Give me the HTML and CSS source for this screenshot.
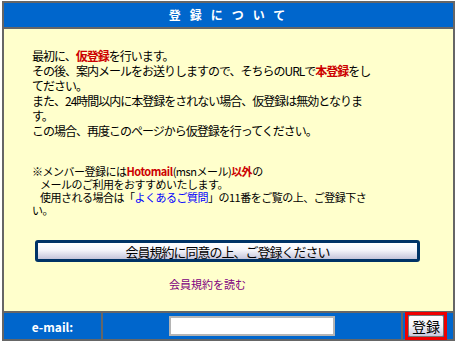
FILE: index.html
```html
<!DOCTYPE html>
<html lang="ja">
<head>
    <meta charset="UTF-8">
    <title>登録について</title>
    <link rel="stylesheet" href="styles.css">
</head>
<body>
    <div class="box">
        <div class="head">登録について</div>

        <div class="content">
            <p class="lead">
                最初に、<b class="red">仮登録</b>を行います。<br>
                その後、案内メールをお送りしますので、そちらのURLで<b class="red">本登録</b>をし<br>
                てださい。<br>
                また、24時間以内に本登録をされない場合、仮登録は無効となりま<br>
                す。<br>
                この場合、再度このページから仮登録を行ってください。
            </p>

            <p class="note">
                ※メンバー登録には<b class="red">Hotomail</b>(msnメール)<b class="red">以外</b>の<br>
                <span class="indent">メールのご利用をおすすめいたします。</span><br>
                <span class="indent">使用される場合は「<a href="#" class="faq">よくあるご質問</a>」の11番をご覧の上、ご登録下さ</span><br>
                い。
            </p>

            <div class="agree-wrap">
                <button class="agree">会員規約に同意の上、ご登録ください</button>
            </div>

            <div class="terms"><a href="#">会員規約を読む</a></div>
        </div>

        <div class="foot">
            <div class="cell label">e-mail:</div>
            <div class="cell field"><input type="text"></div>
            <div class="cell action">
                <div class="mark"><button class="send">登録</button></div>
            </div>
        </div>
    </div>
</body>
</html>
```

FILE: styles.css
```css
body {
    margin: 0;
    padding: 1px 0 0 2px;
    font-family: "Noto Sans CJK JP", "Noto Sans", sans-serif;
    color: #000;
}
.box {
    width: 449px;
    border: 2px solid #666;
    background: #ffffcc;
}
.head {
    height: 24px;
    line-height: 24px;
    background: #0066cc;
    border-bottom: 2px solid #666;
    color: #fff;
    font-weight: bold;
    font-size: 12px;
    text-align: center;
    letter-spacing: 9px;
    padding-left: 6px;
}
.content {
    height: 263px;
    padding: 19px 0 0 28px;
}
.lead {
    margin: 0;
    font-size: 12px;
    line-height: 15px;
    letter-spacing: -1px;
    white-space: nowrap;
}
.note {
    margin: 27px 0 0 0;
    font-size: 11px;
    line-height: 13px;
    letter-spacing: -0.5px;
    white-space: nowrap;
}
.indent {
    padding-left: 8px;
}
.red {
    color: #cc0000;
}
.faq {
    color: #0000ff;
    text-decoration: none;
}
.agree-wrap {
    margin-top: 23px;
    width: 391px;
    padding: 0;
}
.agree {
    display: block;
    margin-left: 3px;
    width: 385px;
    height: 22px;
    padding: 0;
    border: 3px solid #003366;
    border-radius: 3px;
    background: linear-gradient(#ffffff, #f4f4fa 45%, #c4c4da);
    font-family: inherit;
    font-size: 13px;
    letter-spacing: -1px;
    line-height: 15px;
    color: #000;
}
.terms {
    margin-top: 15px;
    font-size: 11px;
    line-height: 14px;
    text-align: center;
    padding-right: 70px;
}
.terms a {
    color: #800080;
    text-decoration: none;
}
.foot {
    display: flex;
    height: 26px;
    background: #0066cc;
    border-top: 2px solid #666;
}
.cell {
    display: flex;
    align-items: center;
    justify-content: center;
}
.label {
    width: 97px;
    border-right: 2px solid #666;
    color: #fff;
    font-weight: bold;
    font-size: 12px;
}
.field {
    width: 298px;
    border-right: 2px solid #666;
}
.field input {
    width: 162px;
    height: 16px;
    padding: 0;
    border: 2px solid #b4b4b4;
    background: #fff;
}
.action {
    flex: 1;
    justify-content: flex-start;
    padding-left: 2px;
}
.mark {
    width: 36px;
    height: 22px;
    border: 3px solid #ee0000;
}
.send {
    display: block;
    width: 36px;
    height: 22px;
    padding: 0;
    border: 1px solid #777;
    border-radius: 2px;
    background: linear-gradient(#ffffff, #f4f4fa 50%, #c8c8dc);
    font-family: inherit;
    font-size: 14px;
    line-height: 18px;
    color: #000;
}
```
